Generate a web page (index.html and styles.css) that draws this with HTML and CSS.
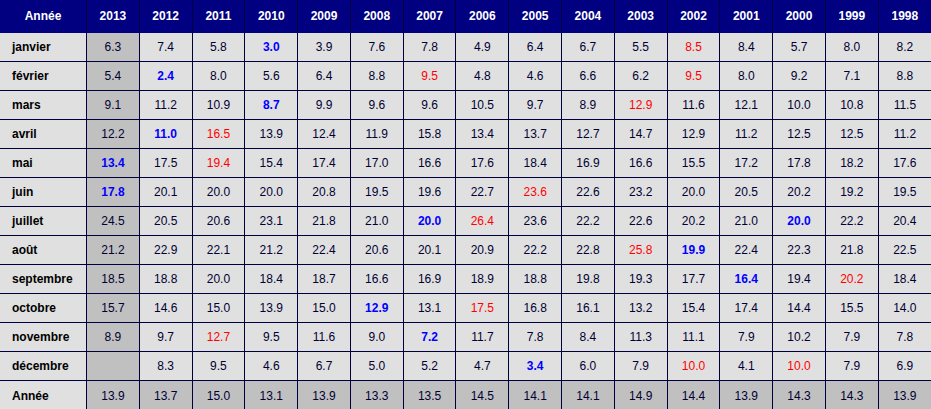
FILE: index.html
```html
<!DOCTYPE html>
<html lang="fr">
<head>
<meta charset="utf-8">
<title>Températures</title>
<link rel="stylesheet" href="styles.css">
</head>
<body>
<table class="temps">
<thead>
<tr class="head"><th class="lbl">Année</th><th>2013</th><th>2012</th><th>2011</th><th>2010</th><th>2009</th><th>2008</th><th>2007</th><th>2006</th><th>2005</th><th>2004</th><th>2003</th><th>2002</th><th>2001</th><th>2000</th><th>1999</th><th>1998</th></tr>
</thead>
<tbody>
<tr><th class="month">janvier</th><td class="cur">6.3</td><td>7.4</td><td>5.8</td><td class="min">3.0</td><td>3.9</td><td>7.6</td><td>7.8</td><td>4.9</td><td>6.4</td><td>6.7</td><td>5.5</td><td class="max">8.5</td><td>8.4</td><td>5.7</td><td>8.0</td><td>8.2</td></tr>
<tr><th class="month">février</th><td class="cur">5.4</td><td class="min">2.4</td><td>8.0</td><td>5.6</td><td>6.4</td><td>8.8</td><td class="max">9.5</td><td>4.8</td><td>4.6</td><td>6.6</td><td>6.2</td><td class="max">9.5</td><td>8.0</td><td>9.2</td><td>7.1</td><td>8.8</td></tr>
<tr><th class="month">mars</th><td class="cur">9.1</td><td>11.2</td><td>10.9</td><td class="min">8.7</td><td>9.9</td><td>9.6</td><td>9.6</td><td>10.5</td><td>9.7</td><td>8.9</td><td class="max">12.9</td><td>11.6</td><td>12.1</td><td>10.0</td><td>10.8</td><td>11.5</td></tr>
<tr><th class="month">avril</th><td class="cur">12.2</td><td class="min">11.0</td><td class="max">16.5</td><td>13.9</td><td>12.4</td><td>11.9</td><td>15.8</td><td>13.4</td><td>13.7</td><td>12.7</td><td>14.7</td><td>12.9</td><td>11.2</td><td>12.5</td><td>12.5</td><td>11.2</td></tr>
<tr><th class="month">mai</th><td class="cur min">13.4</td><td>17.5</td><td class="max">19.4</td><td>15.4</td><td>17.4</td><td>17.0</td><td>16.6</td><td>17.6</td><td>18.4</td><td>16.9</td><td>16.6</td><td>15.5</td><td>17.2</td><td>17.8</td><td>18.2</td><td>17.6</td></tr>
<tr><th class="month">juin</th><td class="cur min">17.8</td><td>20.1</td><td>20.0</td><td>20.0</td><td>20.8</td><td>19.5</td><td>19.6</td><td>22.7</td><td class="max">23.6</td><td>22.6</td><td>23.2</td><td>20.0</td><td>20.5</td><td>20.2</td><td>19.2</td><td>19.5</td></tr>
<tr><th class="month">juillet</th><td class="cur">24.5</td><td>20.5</td><td>20.6</td><td>23.1</td><td>21.8</td><td>21.0</td><td class="min">20.0</td><td class="max">26.4</td><td>23.6</td><td>22.2</td><td>22.6</td><td>20.2</td><td>21.0</td><td class="min">20.0</td><td>22.2</td><td>20.4</td></tr>
<tr><th class="month">août</th><td class="cur">21.2</td><td>22.9</td><td>22.1</td><td>21.2</td><td>22.4</td><td>20.6</td><td>20.1</td><td>20.9</td><td>22.2</td><td>22.8</td><td class="max">25.8</td><td class="min">19.9</td><td>22.4</td><td>22.3</td><td>21.8</td><td>22.5</td></tr>
<tr><th class="month">septembre</th><td class="cur">18.5</td><td>18.8</td><td>20.0</td><td>18.4</td><td>18.7</td><td>16.6</td><td>16.9</td><td>18.9</td><td>18.8</td><td>19.8</td><td>19.3</td><td>17.7</td><td class="min">16.4</td><td>19.4</td><td class="max">20.2</td><td>18.4</td></tr>
<tr><th class="month">octobre</th><td class="cur">15.7</td><td>14.6</td><td>15.0</td><td>13.9</td><td>15.0</td><td class="min">12.9</td><td>13.1</td><td class="max">17.5</td><td>16.8</td><td>16.1</td><td>13.2</td><td>15.4</td><td>17.4</td><td>14.4</td><td>15.5</td><td>14.0</td></tr>
<tr><th class="month">novembre</th><td class="cur">8.9</td><td>9.7</td><td class="max">12.7</td><td>9.5</td><td>11.6</td><td>9.0</td><td class="min">7.2</td><td>11.7</td><td>7.8</td><td>8.4</td><td>11.3</td><td>11.1</td><td>7.9</td><td>10.2</td><td>7.9</td><td>7.8</td></tr>
<tr><th class="month">décembre</th><td class="cur"></td><td>8.3</td><td>9.5</td><td>4.6</td><td>6.7</td><td>5.0</td><td>5.2</td><td>4.7</td><td class="min">3.4</td><td>6.0</td><td>7.9</td><td class="max">10.0</td><td>4.1</td><td class="max">10.0</td><td>7.9</td><td>6.9</td></tr>
</tbody>
<tfoot>
<tr class="total"><th class="month">Année</th><td>13.9</td><td>13.7</td><td>15.0</td><td>13.1</td><td>13.9</td><td>13.3</td><td>13.5</td><td>14.5</td><td>14.1</td><td>14.1</td><td>14.9</td><td>14.4</td><td>13.9</td><td>14.3</td><td>14.3</td><td>13.9</td></tr>
</tfoot>
</table>
</body>
</html>
```
FILE: styles.css
```css
html, body {
  margin: 0;
  padding: 0;
  background: #ffffff;
}

.temps {
  width: 931px;
  border-collapse: collapse;
  border-style: hidden;
  table-layout: fixed;
  font-family: "Liberation Sans", Arial, sans-serif;
  font-size: 12px;
  color: #000033;
}

.temps th,
.temps td {
  border: 1px solid #000040;
  padding: 0;
  text-align: center;
  background: #e0e0e0;
}

.temps th.lbl {
  width: 86px;
}

.head th {
  height: 32px;
  background: #000080;
  color: #ffffff;
  font-weight: bold;
  border-color: #000080;
  border-right-color: #000040;
  border-bottom-color: #000080;
}

.temps tbody td,
.temps tbody th {
  height: 28px;
}

.temps th.month {
  text-align: left;
  padding-left: 12px;
  font-weight: bold;
  color: #000000;
}

.temps td.cur {
  background: #c0c0c0;
}

.temps td.min {
  color: #0000ff;
  font-weight: bold;
}

.temps td.max {
  color: #ff0000;
}

.total td,
.total th {
  height: 29px;
}

.total td {
  background: #c0c0c0;
}
```
